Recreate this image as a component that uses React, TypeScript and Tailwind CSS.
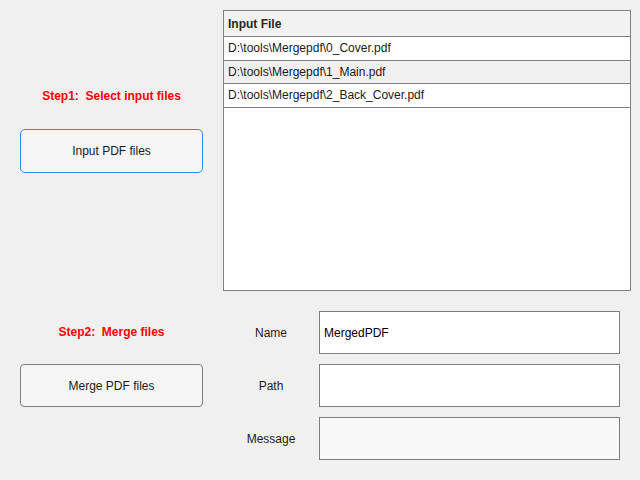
const files = [
  'D:\\tools\\Mergepdf\\0_Cover.pdf',
  'D:\\tools\\Mergepdf\\1_Main.pdf',
  'D:\\tools\\Mergepdf\\2_Back_Cover.pdf',
];

function Field({ label, value, muted }: { label: string; value?: string; muted?: boolean }) {
  return (
    <div className="flex items-center h-[43px]">
      <div className="w-[96px] text-center text-[12px] text-[#1a1a1a]">{label}</div>
      <div
        className={`w-[301px] h-[43px] border border-[#7d7d7d] flex items-center px-[4px] text-[12px] text-black ${
          muted ? 'bg-[#f8f8f8]' : 'bg-white'
        }`}
      >
        {value}
      </div>
    </div>
  );
}

export default function App() {
  return (
    <div
      className="w-[640px] h-[480px] bg-[#f0f0f0] overflow-hidden"
      style={{ fontFamily: '"Liberation Sans", Arial, sans-serif' }}
    >
      {/* Step 1 - input files + table */}
      <div className="flex pt-[10px]">
        <div className="w-[223px] pl-[20px]">
          <div className="w-[183px] mt-[79px] text-center text-[12px] font-bold text-[#ff0000] whitespace-pre leading-[15px]">
            Step1:  Select input files
          </div>
          <button className="mt-[25px] w-[183px] h-[44px] bg-[#f5f5f5] border-[1.5px] border-[#2a8ae8] rounded-[5px] text-[12px] text-[#1a1a1a]">
            Input PDF files
          </button>
        </div>

        <div className="w-[408px] h-[281px] border border-[#808080] bg-white">
          <div className="h-[26px] bg-[#f2f2f2] border-b border-[#808080] flex items-center px-[4px] text-[12px] font-bold text-[#262626]">
            Input File
          </div>
          {files.map((f, i) => (
            <div
              key={f}
              className={`h-[23.5px] border-b border-[#808080] flex items-center px-[4px] text-[12px] text-[#1a1a1a] ${
                i % 2 === 1 ? 'bg-[#f0f0f0]' : 'bg-white'
              }`}
            >
              {f}
            </div>
          ))}
        </div>
      </div>

      {/* Step 2 - merge */}
      <div className="flex pt-[20px]">
        <div className="w-[223px] pl-[20px]">
          <div className="w-[183px] mt-[14px] text-center text-[12px] font-bold text-[#ff0000] whitespace-pre leading-[15px]">
            Step2:  Merge files
          </div>
          <button className="mt-[24px] w-[183px] h-[43px] bg-[#f5f5f5] border border-[#7d7d7d] rounded-[4px] text-[12px] text-[#1a1a1a]">
            Merge PDF files
          </button>
        </div>

        <div className="flex flex-col gap-[10px]">
          <Field label="Name" value="MergedPDF" />
          <Field label="Path" />
          <Field label="Message" muted />
        </div>
      </div>
    </div>
  );
}
